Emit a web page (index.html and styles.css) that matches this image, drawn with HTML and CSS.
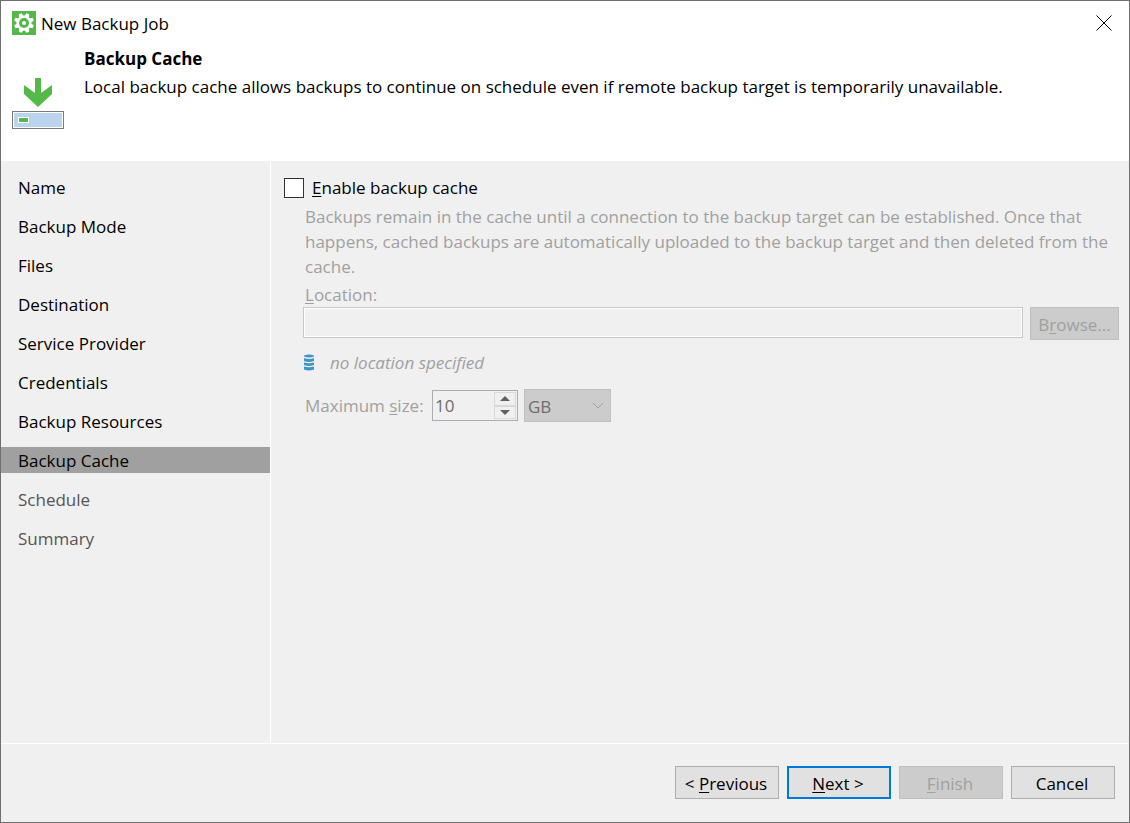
FILE: index.html
```html
<!DOCTYPE html>
<html lang="en">
<head>
    <meta charset="utf-8">
    <meta name="viewport" content="width=device-width, initial-scale=1">
    <title>New Backup Job</title>
    <link rel="stylesheet" href="styles.css">
</head>
<body>
    <form class="window">
        <header class="header">
            <div class="title-bar">
                <svg class="app-icon" viewBox="0 0 24 24" aria-hidden="true">
                    <rect width="24" height="24" fill="#54b948"/>
                    <g fill="#fff" transform="rotate(22.5 12 12)">
                        <path id="teeth" d="M10.500 2h3l1 4v12l-1 4h-3l-1-4V6z"/>
                        <use href="#teeth" transform="rotate(45 12 12)"/>
                        <use href="#teeth" transform="rotate(90 12 12)"/>
                        <use href="#teeth" transform="rotate(135 12 12)"/>
                        <circle cx="12" cy="12" r="7.500"/>
                    </g>
                    <circle cx="12" cy="12" r="5" fill="#54b948"/>
                    <circle cx="12" cy="12" r="2" fill="#fff"/>
                </svg>
                <span class="window-title">New Backup Job</span>
                <button type="button" class="close" aria-label="Close">
                    <svg viewBox="0 0 16 16" width="16" height="16">
                        <path d="M0.5 0.5L15.5 15.5M15.5 0.5L0.5 15.5" stroke="#000" fill="none"/>
                    </svg>
                </button>
            </div>
            <div class="intro">
                <svg class="step-icon" viewBox="0 0 52 52" aria-hidden="true">
                    <path d="M23 1h6v15l11-8v9L26 30 12 17V8l11 8z" fill="#54b948"/>
                    <rect x="0.5" y="34.5" width="51" height="17" fill="#fff" stroke="#7b7b7b"/>
                    <rect x="2" y="36" width="48" height="14" fill="#bad4ee"/>
                    <rect x="6" y="40" width="11" height="6" fill="#fff"/>
                    <rect x="7" y="41" width="9" height="4" fill="#54b948"/>
                </svg>
                <div>
                    <h1>Backup Cache</h1>
                    <p>Local backup cache allows backups to continue on schedule even if remote backup target is temporarily unavailable.</p>
                </div>
            </div>
        </header>

        <div class="body">
            <nav class="steps">
                <a href="#">Name</a>
                <a href="#">Backup Mode</a>
                <a href="#">Files</a>
                <a href="#">Destination</a>
                <a href="#">Service Provider</a>
                <a href="#">Credentials</a>
                <a href="#">Backup Resources</a>
                <a href="#" class="current">Backup Cache</a>
                <a href="#" class="pending">Schedule</a>
                <a href="#" class="pending">Summary</a>
            </nav>

            <main class="content">
                <div class="enable">
                    <input type="checkbox" id="enable-cache">
                    <label for="enable-cache"><u>E</u>nable backup cache</label>
                </div>
                <div class="options">
                    <p class="hint">Backups remain in the cache until a connection to the backup target can be established. Once that happens, cached backups are automatically uploaded to the backup target and then deleted from the cache.</p>
                    <label class="location-label" for="location"><u>L</u>ocation:</label>
                    <div class="location">
                        <input type="text" id="location" disabled>
                        <button type="button" class="browse" disabled>B<u>r</u>owse...</button>
                    </div>
                    <div class="status">
                        <svg viewBox="0 0 12 17" width="12" height="17" fill="#3f94c9" aria-hidden="true">
                            <path d="M1 1.500q5-2 10 0v1q-5 2-10 0z"/>
                            <path d="M1 4q5 2 10 0v3q-5 2-10 0z"/>
                            <path d="M1 8.500q5 1.500 10 0v2.500q-5 2-10 0z"/>
                            <path d="M1 12.500q5 1.500 10 0v3q-5 2-10 0z"/>
                        </svg>
                        <em>no location specified</em>
                    </div>
                    <div class="size">
                        <label for="max-size">Maximum <u>s</u>ize:</label>
                        <div class="spinner">
                            <input type="number" id="max-size" value="10" disabled>
                            <div class="arrows">
                                <button type="button" aria-label="Increase" disabled>
                                    <svg viewBox="0 0 10 5" width="10" height="5"><path d="M5 0l5 5H0z" fill="#606060"/></svg>
                                </button>
                                <button type="button" aria-label="Decrease" disabled>
                                    <svg viewBox="0 0 10 5" width="10" height="5"><path d="M0 0h10L5 5z" fill="#606060"/></svg>
                                </button>
                            </div>
                        </div>
                        <div class="unit">
                            <select aria-label="Size unit" disabled>
                                <option>GB</option>
                            </select>
                            <svg viewBox="0 0 12 7" width="12" height="7"><path d="M1 1l5 5 5-5" fill="none" stroke="#a0a0a0"/></svg>
                        </div>
                    </div>
                </div>
            </main>
        </div>

        <footer class="footer">
            <button type="button">&lt; <u>P</u>revious</button>
            <button type="submit" class="default"><u>N</u>ext &gt;</button>
            <button type="button" disabled><u>F</u>inish</button>
            <button type="button">Cancel</button>
        </footer>
    </form>
</body>
</html>
```

FILE: styles.css
```css
* {
    box-sizing: border-box;
}
body {
    margin: 0;
    font-family: "Open Sans", "Noto Sans", sans-serif;
    font-size: 17px;
    line-height: 25px;
    color: #000;
}
h1, p {
    margin: 0;
    font-size: 17px;
}
button, input, select {
    font: inherit;
    color: inherit;
    margin: 0;
    border-radius: 0;
}
u {
    text-underline-offset: 2px;
    text-decoration-thickness: 1px;
}
.window {
    display: flex;
    flex-direction: column;
    min-height: 100vh;
    border: 1px solid #6f6f6f;
    background-color: #f0f0f0;
}

/* Header */
.header {
    background-color: #fff;
    padding: 9px 12px 32px 11px;
}
.title-bar {
    display: flex;
    align-items: center;
    gap: 5px;
    height: 26px;
}
.app-icon {
    width: 24px;
    height: 24px;
}
.close {
    display: flex;
    margin-left: auto;
    padding: 5px;
    border: 0;
    background: none;
}
.intro {
    display: flex;
    gap: 20px;
}
.intro p {
    margin-top: 3px;
}
.intro h1 {
    margin-top: 10px;
}
.step-icon {
    flex: none;
    width: 52px;
    height: 52px;
    margin-top: 41px;
}

/* Steps list and page */
.body {
    display: flex;
    flex: 1;
}
.steps {
    display: flex;
    flex-direction: column;
    gap: 13px;
    width: 270px;
    padding-top: 13px;
    border-right: 1px solid #fff;
}
.steps a {
    padding: 2px 0 0 17px;
    line-height: 24px;
    color: #000;
    text-decoration: none;
}
.steps .current {
    background-color: #a0a0a0;
}
.steps .pending {
    color: #555;
}
.content {
    flex: 1;
    padding: 14px 10px 14px 13px;
}
.enable {
    display: flex;
    align-items: center;
    gap: 8px;
}
.enable input {
    appearance: none;
    width: 20px;
    height: 20px;
    border: 1px solid #333;
    background-color: #fff;
}
.options {
    padding: 4px 0 0 19px;
    color: #a0a0a0;
}
.hint, .location-label {
    display: block;
    padding-left: 2px;
}
.location-label {
    margin-top: 3px;
}
.location {
    display: flex;
    align-items: flex-start;
    gap: 7px;
}
.location input {
    flex: 1;
    height: 31px;
    border: 1px solid #c8c8c8;
    background-color: #f0f0f0;
    box-shadow: inset 0 0 0 1px #fff;
}
.status {
    display: flex;
    align-items: center;
    gap: 15px;
    margin-top: 10px;
}
.size {
    display: flex;
    align-items: center;
    gap: 6px;
    margin-top: 14px;
    padding-left: 2px;
}
.size label {
    width: 121px;
}
.spinner {
    display: flex;
    width: 86px;
    height: 31px;
    padding: 1px;
    border: 1px solid #abadb3;
    color: #6d6d6d;
}
.spinner input {
    flex: 1;
    min-width: 0;
    padding: 0 1px;
    border: 0;
    background: none;
    appearance: textfield;
}
.spinner input::-webkit-inner-spin-button {
    appearance: none;
    margin: 0;
}
.arrows {
    display: flex;
    flex-direction: column;
    width: 22px;
}
.arrows button {
    display: flex;
    flex: 1;
    align-items: center;
    justify-content: center;
    padding: 0;
    border: 1px solid #d9d9d9;
    background-color: #f0f0f0;
}
.unit {
    display: grid;
    align-items: center;
    width: 87px;
    color: #6d6d6d;
}
.unit select, .unit svg {
    grid-area: 1 / 1;
}
.unit select {
    appearance: none;
    height: 33px;
    padding: 2px 3px 0;
    border: 1px solid #bfbfbf;
    background-color: #ccc;
    opacity: 1;
}
.unit svg {
    justify-self: end;
    margin-right: 7px;
    z-index: 1;
    pointer-events: none;
}

/* Buttons */
.footer {
    display: flex;
    justify-content: flex-end;
    gap: 8px;
    padding: 22px 14px 23px;
    border-top: 1px solid #fff;
}
.footer button, .browse {
    width: 104px;
    height: 33px;
    padding: 2px 2px 0 0;
    border: 1px solid #adadad;
    background-color: #e1e1e1;
}
.footer .default {
    border: 2px solid #0078d7;
}
.browse {
    width: 89px;
    padding-right: 0;
}
.footer button:disabled, .browse:disabled {
    border-color: #bfbfbf;
    background-color: #ccc;
    color: #a0a0a0;
}
```
